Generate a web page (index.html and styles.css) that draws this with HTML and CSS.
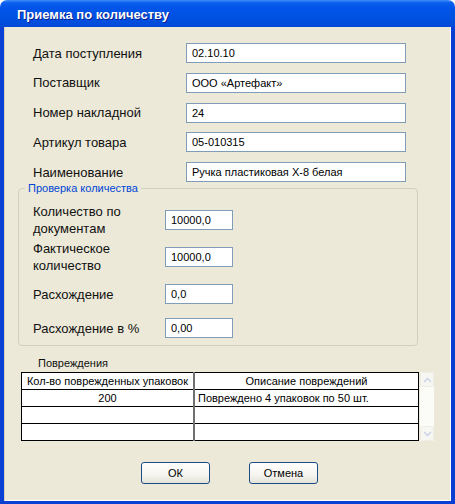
FILE: index.html
```html
<!DOCTYPE html>
<html lang="ru">
<head>
<meta charset="utf-8">
<title>Приемка по количеству</title>
<link rel="stylesheet" href="styles.css">
</head>
<body>
<div class="window">
  <div class="titlebar"><span class="title">Приемка по количеству</span></div>
  <div class="client">
    <div class="form">
      <label class="lbl">Дата поступления</label><div class="field wide">02.10.10</div>
      <label class="lbl">Поставщик</label><div class="field wide">ООО «Артефакт»</div>
      <label class="lbl">Номер накладной</label><div class="field wide">24</div>
      <label class="lbl">Артикул товара</label><div class="field wide">05-010315</div>
      <label class="lbl">Наименование</label><div class="field wide">Ручка пластиковая Х-8 белая</div>
    </div>
    <fieldset class="group">
      <legend class="legend">Проверка количества</legend>
      <div class="qty">
        <div class="qrow two"><label class="lbl qlbl">Количество по<br>документам</label><div class="field short">10000,0</div></div>
        <div class="qrow two r2"><label class="lbl qlbl">Фактическое<br>количество</label><div class="field short">10000,0</div></div>
        <div class="qrow r3"><label class="lbl qlbl">Расхождение</label><div class="field short">0,0</div></div>
        <div class="qrow r4"><label class="lbl qlbl">Расхождение в %</label><div class="field short">0,00</div></div>
      </div>
    </fieldset>
    <div class="damage-title">Повреждения</div>
    <div class="grid-wrap">
      <table class="grid">
        <thead>
          <tr><th class="c1">Кол-во поврежденных упаковок</th><th class="c2">Описание повреждений</th></tr>
        </thead>
        <tbody>
          <tr><td class="c1 center">200</td><td class="c2">Повреждено 4 упаковок по 50 шт.</td></tr>
          <tr><td class="c1"></td><td class="c2"></td></tr>
          <tr><td class="c1"></td><td class="c2"></td></tr>
        </tbody>
      </table>
      <div class="scrollbar">
        <div class="sbtn"><svg width="9" height="6" viewBox="0 0 9 6"><path d="M1 5 L4.5 1.5 L8 5" fill="none" stroke="#c9d2e6" stroke-width="1.4"/></svg></div>
        <div class="strack"></div>
        <div class="sbtn"><svg width="9" height="6" viewBox="0 0 9 6"><path d="M1 1 L4.5 4.5 L8 1" fill="none" stroke="#c9d2e6" stroke-width="1.4"/></svg></div>
      </div>
    </div>
    <div class="buttons">
      <button class="btn">ОК</button>
      <button class="btn">Отмена</button>
    </div>
  </div>
</div>
</body>
</html>
```
FILE: styles.css
```css
html, body {
  margin: 0;
  padding: 0;
  background: #ffffff;
}
.window {
  width: 455px;
  height: 504px;
  display: flex;
  flex-direction: column;
  font-family: "Liberation Sans", Arial, sans-serif;
  box-sizing: border-box;
}
.titlebar {
  height: 27px;
  flex: 0 0 27px;
  box-sizing: border-box;
  background: linear-gradient(to bottom, #3d8cf5 0px, #0a5ef0 3px, #0055e8 8px, #0050e0 20px, #0348d6 27px);
  border-radius: 7px 7px 0 0;
  display: flex;
  align-items: center;
  padding-left: 17px;
  padding-top: 1px;
}
.title {
  color: #ffffff;
  font-weight: bold;
  font-size: 13px;
  text-shadow: 1px 1px 0 #0a1e8c;
}
.client {
  flex: 1;
  background: #ece9d8;
  border-left: 4px solid #0a3fd3;
  border-right: 4px solid #0a3fd3;
  border-bottom: 3px solid #0a3fd3;
  box-shadow: inset 1px 0 0 #d6d2c2, inset -1px 0 0 #ffffff, inset 0 -1px 0 #ffffff;
  display: flex;
  flex-direction: column;
}
.form {
  display: grid;
  grid-template-columns: 153px 220px;
  grid-auto-rows: 20px;
  row-gap: 9.75px;
  padding: 16px 0 0 29px;
  align-items: center;
}
.lbl {
  font-size: 13px;
  color: #111111;
  line-height: 17px;
}
.field {
  height: 20px;
  box-sizing: border-box;
  border: 1px solid #7f9db9;
  background: #ffffff;
  font-size: 11px;
  line-height: 18px;
  padding-left: 5px;
  color: #000000;
  white-space: nowrap;
}
.field.short {
  width: 68px;
}
.group {
  margin: 0 0 0 14px;
  width: 400px;
  box-sizing: border-box;
  border: 1px solid #d0d0bf;
  border-radius: 4px;
  padding: 9px 0 7px 14px;
}
.legend {
  font-size: 11px;
  line-height: 12px;
  color: #0046d5;
  padding: 0 3px;
  margin-left: -8px;
}
.qty {
  display: flex;
  flex-direction: column;
}
.qrow {
  display: flex;
  align-items: center;
  height: 20px;
}
.qrow.two {
  height: 34px;
}
.qlbl {
  width: 132px;
}
.qrow.r2 { margin-top: 3px; }
.qrow.r3 { margin-top: 10px; }
.qrow.r4 { margin-top: 14px; }
.damage-title {
  font-size: 11px;
  color: #111111;
  margin: 11px 0 0 34px;
  line-height: 13px;
}
.grid-wrap {
  display: flex;
  margin: 2px 0 0 17px;
  align-items: flex-start;
}
.grid {
  border-collapse: collapse;
  width: 398px;
  font-size: 11px;
  color: #000000;
  background: #ffffff;
}
.grid th, .grid td {
  height: 16px;
  padding: 0;
  border: 1px solid #000000;
  font-weight: normal;
  line-height: 15px;
}
.grid .c1 {
  width: 171px;
  border-right: 2px solid #707070;
}
.grid th.c2 {
  text-align: center;
}
.grid td.c2 {
  padding-left: 3px;
}
.grid .center { text-align: center; }
.scrollbar {
  width: 14px;
  height: 69px;
  margin-left: 1px;
  display: flex;
  flex-direction: column;
  background: #f7f7f3;
}
.sbtn {
  height: 15px;
  box-sizing: border-box;
  border: 1px solid #eeede5;
  border-radius: 2px;
  background: #f6f6f2;
  display: flex;
  align-items: center;
  justify-content: center;
}
.strack {
  flex: 1;
  background: #fbfbf8;
}
.buttons {
  display: flex;
  justify-content: center;
  gap: 39px;
  margin-top: 21px;
  padding-left: 4px;
}
.btn {
  width: 69px;
  height: 22px;
  box-sizing: border-box;
  border: 1px solid #1c4a85;
  border-radius: 3px;
  background: linear-gradient(to bottom, #ffffff 0%, #f5f4ef 60%, #e4e2d8 100%);
  font-family: "Liberation Sans", Arial, sans-serif;
  font-size: 11px;
  font-weight: normal;
  color: #000000;
  padding: 0;
}
```
